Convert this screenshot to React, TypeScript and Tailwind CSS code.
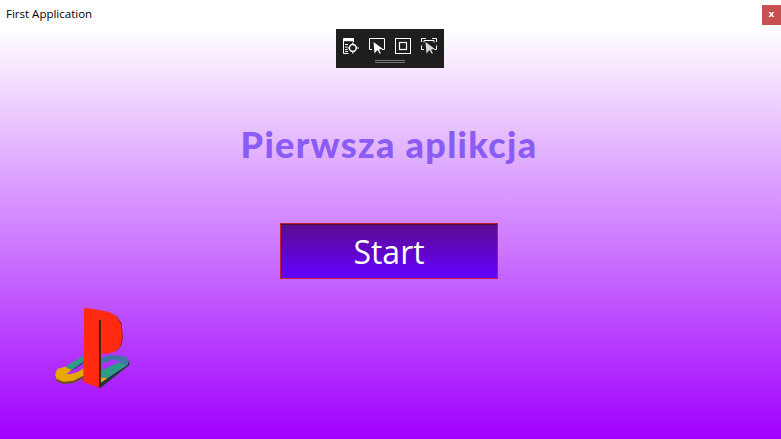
import { useState } from 'react';

const segoe = "font-['Open_Sans','Noto_Sans',sans-serif]";

function ToolbarIcons() {
  return (
    <div className="flex items-center gap-2.5 text-white">
      {/* Live visual tree */}
      <svg width="16" height="16" viewBox="0 0 16 16" fill="none" stroke="currentColor" strokeWidth="1">
        <path d="M5.5 15.5H0.5V0.5H10.5V4" />
        <path d="M0.5 2H10.5" strokeWidth="2.4" />
        <path d="M2 6.5H5M2 9H4.5M2 11.5H4.5M2 13.5H5" />
        <circle cx="9.8" cy="10" r="3.4" strokeWidth="1.5" />
        <path d="M9.8 4.5V6.5M9.8 13.5V15.5M4.5 10H6.5M13 10H16" strokeWidth="1.2" />
      </svg>
      {/* Select element */}
      <svg width="16" height="16" viewBox="0 0 16 16" fill="none" stroke="currentColor" strokeWidth="1">
        <path d="M3 11.5H0.5V0.5H15.5V11.5H13" />
        <path d="M4.5 4L14 11L10 11.5L12 15.5H10.5L8.5 12L5.5 15.5Z" fill="currentColor" stroke="none" />
      </svg>
      {/* Display layout adorners */}
      <svg width="16" height="16" viewBox="0 0 16 16" fill="none" stroke="currentColor">
        <rect x="0.5" y="0.5" width="15" height="15" strokeWidth="1" />
        <rect x="4.5" y="4.5" width="7" height="7" strokeWidth="1.2" />
      </svg>
      {/* Track focused element */}
      <svg width="16" height="16" viewBox="0 0 16 16" fill="none" stroke="currentColor" strokeWidth="1">
        <path d="M0.5 4V0.5H5M11 0.5H15.5V4M0.5 7.5V11.5H3M15.5 7.5V11.5H13.5" />
        <path d="M3 4.5V2.5H13V4.5" />
        <path d="M4.5 4L14 11L10 11.5L12 15.5H10.5L8.5 12L5.5 15.5Z" fill="#d8d8d8" stroke="none" />
      </svg>
    </div>
  );
}

function PlayStationLogo() {
  return (
    <svg width="105" height="100" viewBox="0 0 315 300">
      <g transform="translate(30 150)">
        {/* underside of the left loop */}
        <path d="M65 75L100 50V55L60 80Z" fill="#17403a" />
        <path d="M20 102L40 110L70 107L100 92V100L70 114L40 117L18 108Z" fill="#6b5410" />
        {/* left loop */}
        <path d="M45 65L100 32V50L65 75Z" fill="#2f9a86" />
        <path d="M15 88L22 72L45 65L65 75L50 86L60 88L85 80L100 70V92L70 107L40 110L20 102Z" fill="#e6a800" />
        {/* right loop */}
        <path d="M232 60L238 45V60L150 130L145 125L150 115L172 100Z" fill="#1d3a34" />
        <path d="M150 40L180 30L222 33L238 45L232 60L215 55L205 47L185 45L150 60Z" fill="#3f74a4" />
        <path d="M150 78L205 52L215 55L232 60L172 100L150 97Z" fill="#2f9a86" />
        <path d="M150 97L172 100L150 115Z" fill="#e6a800" />
      </g>
      {/* letter P */}
      <path d="M177 75L183 72V270L177 278Z" fill="#40240c" />
      <path d="M228 60L245 85L249 125L245 150L228 170L240 130L238 90Z" fill="#a81c10" />
      <path d="M132 40H148L205 50L228 62L243 90L246 125L240 155L222 172L190 178L184 175V72L177 75V278L132 262Z" fill="#ff2a10" />
    </svg>
  );
}

export default function App() {
  const [started, setStarted] = useState(false);

  return (
    <div className={`relative flex h-[439px] w-[781px] flex-col overflow-hidden bg-white ${segoe}`}>
      {/* Title bar */}
      <div className="flex h-7 items-start justify-between bg-white">
        <span className="pl-1.5 pt-[5px] text-[11.5px] leading-[18px] text-black">First Application</span>
        <button className="mt-[5px] flex h-5 w-[19px] items-center justify-center bg-[#c75050] font-['DejaVu_Sans',sans-serif] text-[9px] font-bold text-white">
          x
        </button>
      </div>

      {/* Debug toolbar */}
      <div className="absolute left-[336px] top-[29px] flex h-[39px] w-[108px] flex-col items-center bg-[#1e1e1e] pt-[9px]">
        <ToolbarIcons />
        <div className="mt-[6px] h-[3px] w-[30px] border-y border-[#777]" />
      </div>

      {/* Window content */}
      <main className="flex flex-1 flex-col items-center bg-linear-to-b/srgb from-white to-[#a000ff] pr-[3px] pt-[94px]">
        <h1 className="font-['Lato',sans-serif] text-[36px] font-black leading-[44px] tracking-[1.3px] text-[#8a5cf5]">
          Pierwsza aplikcja
        </h1>
        <button
          onClick={() => setStarted(!started)}
          className="mt-[57px] h-14 w-[218px] border border-[#c02030] bg-linear-to-b/srgb from-[#5c0a90] to-[#6400ff] pt-0.5 text-[32px] leading-none text-white shadow-[inset_0_1px_0_#4a0a3a]"
        >
          Start
        </button>
        <div className="mt-4 self-start pl-10">
          <PlayStationLogo />
        </div>
      </main>
    </div>
  );
}
